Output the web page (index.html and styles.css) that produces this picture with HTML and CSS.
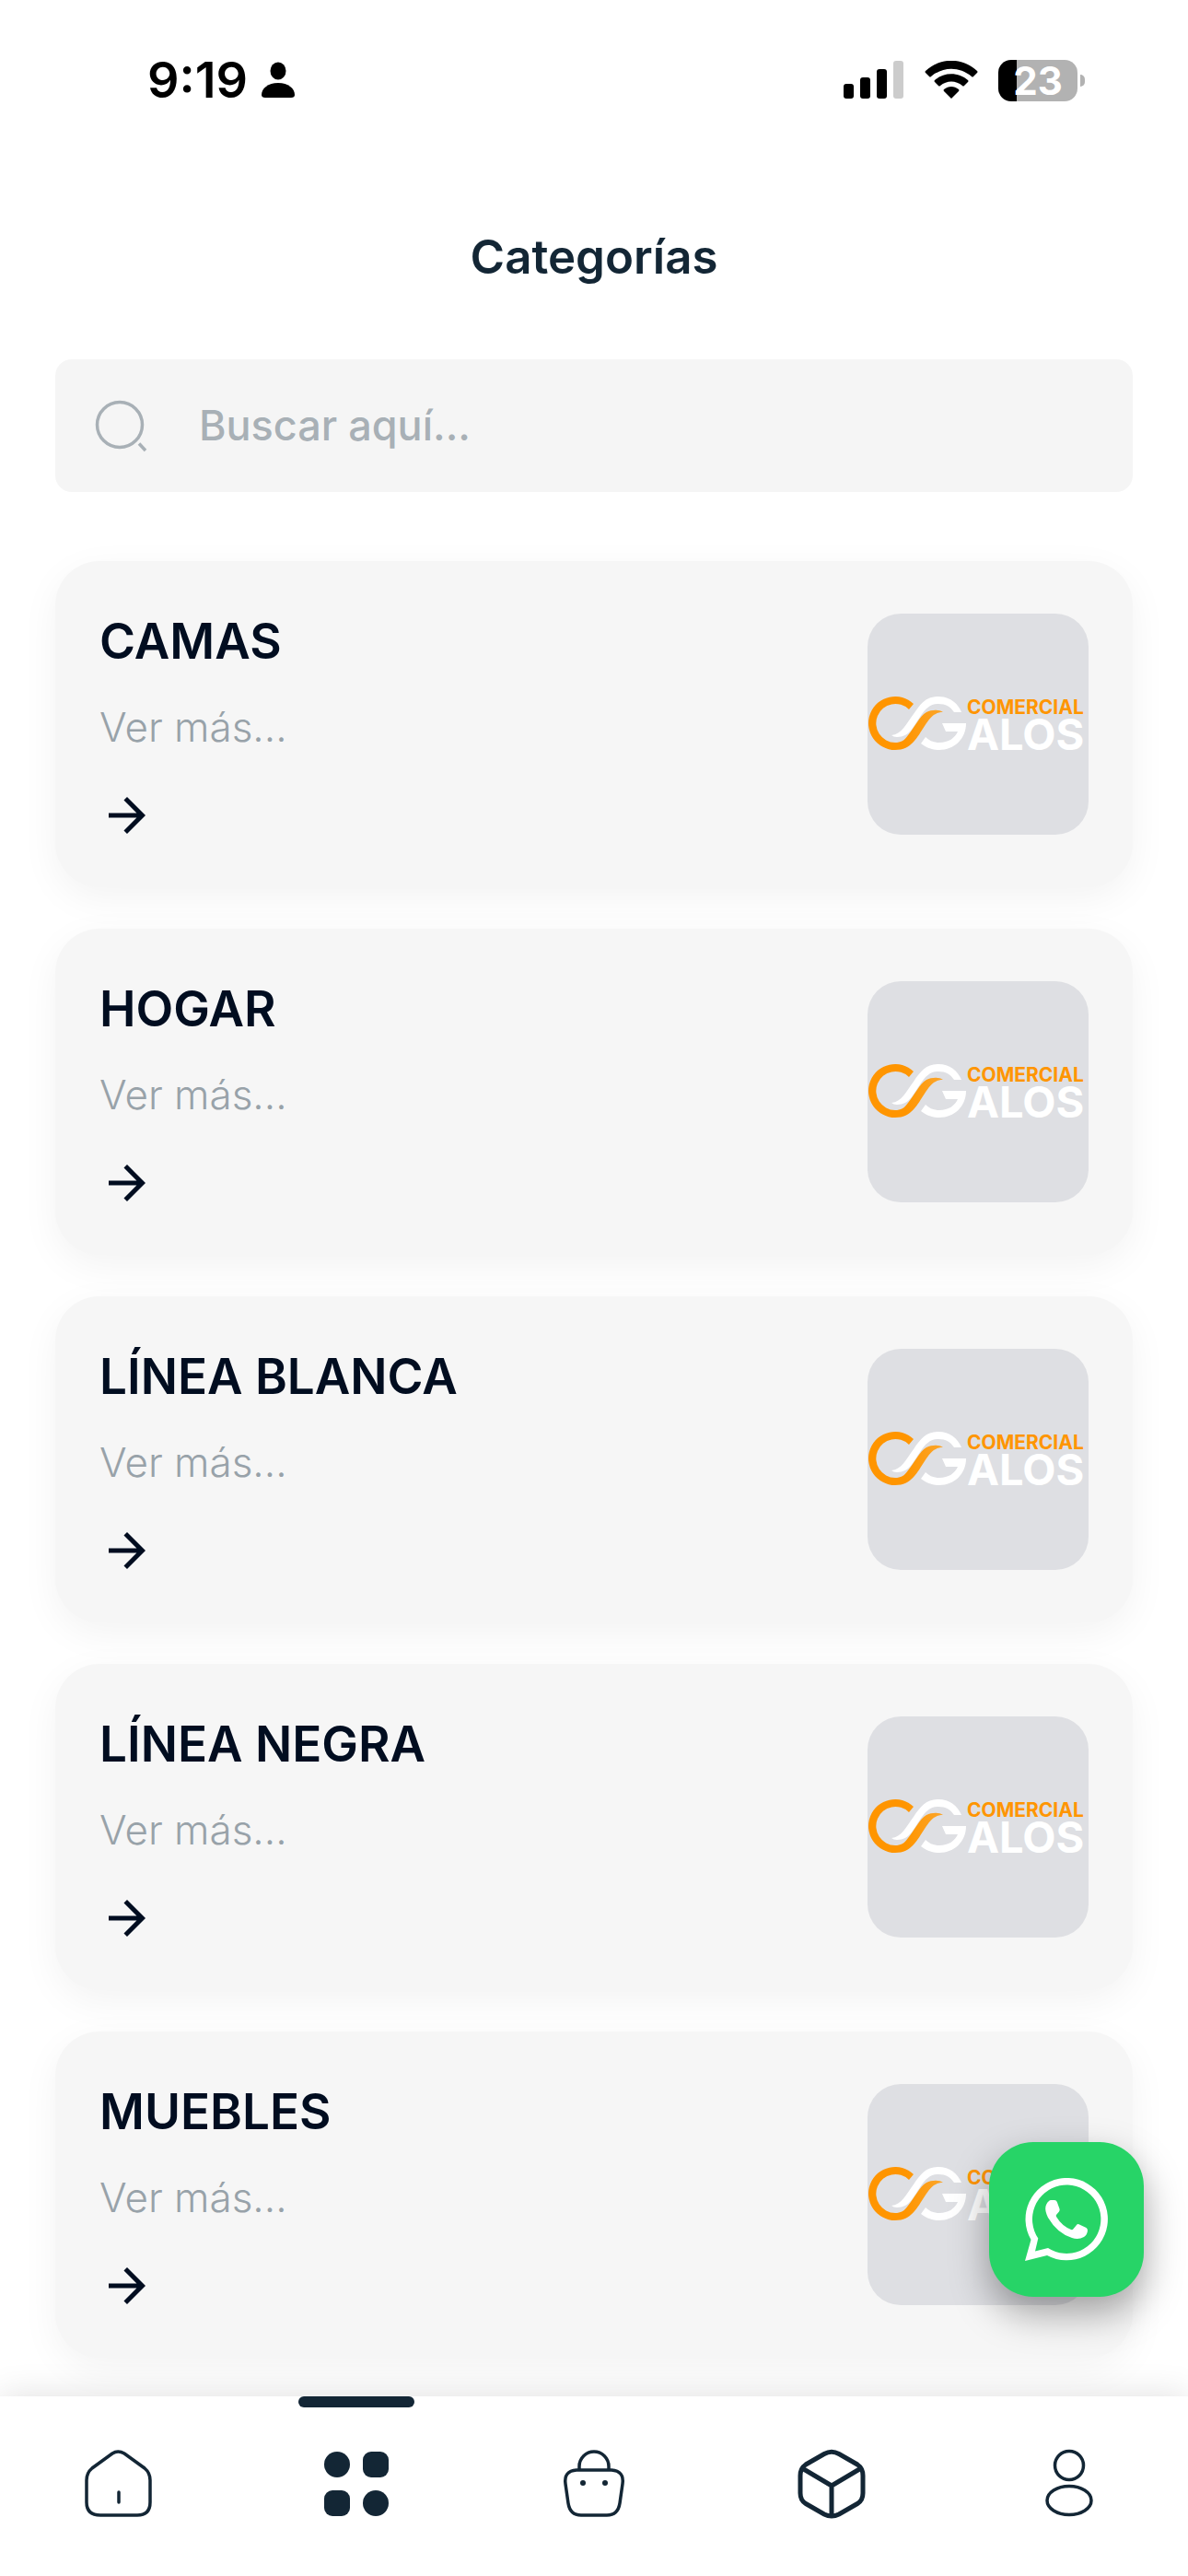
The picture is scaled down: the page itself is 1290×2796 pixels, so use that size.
FILE: index.html
```html
<!DOCTYPE html>
<html lang="es">
<head>
    <meta charset="UTF-8">
    <meta name="viewport" content="width=device-width, initial-scale=1.0">
    <title>Categorías</title>
    <link rel="stylesheet" href="styles.css">
</head>
<body>
    <!-- Shared drawings -->
    <svg class="defs" width="0" height="0" aria-hidden="true">
        <linearGradient id="ribbon" x1="0" y1="0" x2="1" y2="0">
            <stop offset="0.5" stop-color="#ff9500"/>
            <stop offset="1" stop-color="#fba62c"/>
        </linearGradient>
        <symbol id="logo" viewBox="0 89 108 62">
            <path fill="#fff" d="M26 132C37 131 42 120 50 109C58 97 64 90 77 90C89 90 98 97 102 107L94 107C90 101 85 98 77 98C68 98 63 103 57 112C50 122 46 134 32 134Q28 134 26 132Z"/>
            <path fill="url(#ribbon)" d="M50 98A29 29 0 1 0 30 148C48 148 54 134 62 122C68 113 72 107 82 107C78 104 70 104 64 107C56 112 52 122 44 132C40 138 36 140 30 140A21 21 0 1 1 45 104Z"/>
            <path fill="#fff" d="M81 119H107C107 136 94 148 78 148C70 148 63 145 58 141L63 134C67 138 72 140 78 140C88 140 95 135 98 128H85Z"/>
        </symbol>
        <symbol id="arrow" viewBox="0 0 24 24">
            <path fill="currentColor" d="M12 4l-1.41 1.41L16.17 11H4v2h12.17l-5.58 5.59L12 20l8-8z"/>
        </symbol>
    </svg>

    <div class="status-bar">
        <div class="status-left">
            <span class="time">9:19</span>
            <svg width="36" height="40" viewBox="0 0 36 40">
                <ellipse cx="18" cy="10" rx="8.5" ry="9.5"/>
                <path d="M4 39Q0 39 0 36C0 29 7 23 18 23S36 29 36 36Q36 39 32 39Z"/>
            </svg>
        </div>
        <div class="status-right">
            <svg width="66" height="42" viewBox="0 0 66 42">
                <rect x="0" y="25" width="11" height="16" rx="3"/>
                <rect x="18" y="18" width="11" height="23" rx="3"/>
                <rect x="36" y="9" width="11" height="32" rx="3"/>
                <rect x="54" y="0" width="11" height="41" rx="3" fill="#ccc"/>
            </svg>
            <svg width="58" height="42" viewBox="0 0 58 42">
                <path d="M1 13Q0 12 1 11C17-4 41-4 57 11Q58 12 57 13L53 17Q52 18 51 17C38 6 20 6 7 17Q6 18 5 17Z"/>
                <path d="M11 23Q10 22 11 21C21 12 37 12 47 21Q48 22 47 23L43 27Q42 28 41 27C34 21 24 21 17 27Q16 28 15 27Z"/>
                <path d="M21 33Q20 32 21 31C26 27 32 27 37 31Q38 32 37 33L29 41Z"/>
            </svg>
            <div class="battery"><span class="level">23</span></div>
        </div>
    </div>

    <header class="header">
        <h1>Categorías</h1>
    </header>

    <main class="content">
        <label class="search">
            <svg width="60" height="60" viewBox="0 0 60 60" fill="none" stroke="currentColor" stroke-width="3.5">
                <circle cx="28" cy="29" r="24.5"/>
                <path d="M49 49.5l7 7.5"/>
            </svg>
            <input type="text" placeholder="Buscar aquí..." aria-label="Buscar aquí">
        </label>

        <div class="categories">
            <a class="card" href="#camas">
                <div class="card-text">
                    <h2>CAMAS</h2>
                    <p>Ver más...</p>
                    <svg class="arrow"><use href="#arrow"/></svg>
                </div>
                <div class="thumb">
                    <svg class="mark"><use href="#logo"/></svg>
                    <div class="brand"><span class="brand-top">COMERCIAL</span><span class="brand-name">ALOS</span></div>
                </div>
            </a>
            <a class="card" href="#hogar">
                <div class="card-text">
                    <h2>HOGAR</h2>
                    <p>Ver más...</p>
                    <svg class="arrow"><use href="#arrow"/></svg>
                </div>
                <div class="thumb">
                    <svg class="mark"><use href="#logo"/></svg>
                    <div class="brand"><span class="brand-top">COMERCIAL</span><span class="brand-name">ALOS</span></div>
                </div>
            </a>
            <a class="card" href="#linea-blanca">
                <div class="card-text">
                    <h2>LÍNEA BLANCA</h2>
                    <p>Ver más...</p>
                    <svg class="arrow"><use href="#arrow"/></svg>
                </div>
                <div class="thumb">
                    <svg class="mark"><use href="#logo"/></svg>
                    <div class="brand"><span class="brand-top">COMERCIAL</span><span class="brand-name">ALOS</span></div>
                </div>
            </a>
            <a class="card" href="#linea-negra">
                <div class="card-text">
                    <h2>LÍNEA NEGRA</h2>
                    <p>Ver más...</p>
                    <svg class="arrow"><use href="#arrow"/></svg>
                </div>
                <div class="thumb">
                    <svg class="mark"><use href="#logo"/></svg>
                    <div class="brand"><span class="brand-top">COMERCIAL</span><span class="brand-name">ALOS</span></div>
                </div>
            </a>
            <a class="card" href="#muebles">
                <div class="card-text">
                    <h2>MUEBLES</h2>
                    <p>Ver más...</p>
                    <svg class="arrow"><use href="#arrow"/></svg>
                </div>
                <div class="thumb">
                    <svg class="mark"><use href="#logo"/></svg>
                    <div class="brand"><span class="brand-top">COMERCIAL</span><span class="brand-name">ALOS</span></div>
                </div>
            </a>
        </div>
    </main>

    <button class="whatsapp" type="button" aria-label="WhatsApp">
        <svg width="90" height="90" viewBox="0 0 90 90" fill="#fff">
            <path fill-rule="evenodd" d="M0 90L6.500 67A44.700 44.700 0 1 1 24 84ZM11 79.500L25 76A37.200 37.200 0 1 0 14.300 65.500Z"/>
            <path d="M28 24H32Q34 24 34.800 26L37.500 33.500Q38 35 37 36.500L34 40Q33.400 41 34 42Q40 52 50 56Q51.500 56.500 52.500 55.300L56 51Q57 49.700 58.500 50.300L66.500 54Q68 55 68 57Q67.500 62 64 64Q58 67.500 51 65Q35 60 25 43Q19 31 26 25Q27 24 28 24Z"/>
        </svg>
    </button>

    <nav class="tab-bar">
        <a class="tab" href="#inicio" aria-label="Inicio">
            <svg width="78" height="78" viewBox="0 0 78 78" fill="none" stroke="currentColor" stroke-width="3.5">
                <path d="M32 6Q38 2 45 6L67 22Q73 27 73 35V59Q73 73 59 73H19Q4 73 4 59V35Q4 27 10 22Z"/>
                <path d="M39 48V59" stroke-linecap="round"/>
            </svg>
        </a>
        <a class="tab active" href="#categorias" aria-label="Categorías">
            <svg width="78" height="78" viewBox="0 0 78 78" fill="currentColor">
                <circle cx="18" cy="18" r="14"/>
                <rect x="46" y="4" width="28" height="28" rx="9"/>
                <rect x="4" y="46" width="28" height="28" rx="9"/>
                <circle cx="60" cy="60" r="14"/>
            </svg>
        </a>
        <a class="tab" href="#carrito" aria-label="Carrito">
            <svg width="78" height="78" viewBox="0 0 78 78" fill="none" stroke="currentColor" stroke-width="3.500">
                <path d="M23 24V20A16 16 0 0 1 55 20V24"/>
                <path d="M20 24H58Q72 25 70 39L67 60Q65 73 53 73H25Q13 73 11 60L8 39Q6 25 20 24Z"/>
                <circle cx="27" cy="38" r="3" fill="currentColor" stroke="none"/>
                <circle cx="51" cy="38" r="3" fill="currentColor" stroke="none"/>
            </svg>
        </a>
        <a class="tab" href="#pedidos" aria-label="Pedidos">
            <svg width="78" height="78" viewBox="0 0 78 78" fill="none" stroke="currentColor" stroke-width="5">
                <path d="M31 6.500Q39 2 47 6.500L67 18Q73 22 73 30V49Q73 57 67 60.500L47 72Q39 76 31 72L11 60.500Q5 57 5 49V30Q5 22 11 18Z"/>
                <path d="M7 22L39 41L71 22M39 41V74"/>
            </svg>
        </a>
        <a class="tab" href="#perfil" aria-label="Perfil">
            <svg width="78" height="78" viewBox="0 0 78 78" fill="none" stroke="currentColor" stroke-width="3.500">
                <circle cx="39" cy="19" r="15.500"/>
                <ellipse cx="39" cy="57" rx="24" ry="15.500"/>
            </svg>
        </a>
    </nav>
</body>
</html>
```
FILE: styles.css
```css
* {
    box-sizing: border-box;
}

body {
    font-family: Inter, "Liberation Sans", sans-serif;
    margin: 0;
    min-height: 100vh;
    display: flex;
    flex-direction: column;
    background-color: #fff;
    color: #132635;
}

svg {
    display: block;
    flex: none;
}

.defs {
    position: absolute;
}

/* Status bar */
.status-bar {
    display: flex;
    justify-content: space-between;
    align-items: center;
    height: 174px;
    padding: 0 120px 0 160px;
    color: #000;
}

.status-left {
    display: flex;
    align-items: center;
    gap: 15px;
}

.time {
    font-size: 54px;
    font-weight: 600;
    line-height: 60px;
}

.status-right {
    display: flex;
    align-items: center;
    gap: 22px;
}

.battery {
    position: relative;
    width: 86px;
    height: 45px;
    border-radius: 14px;
    background: linear-gradient(to right, #000 20px, #b2b2b2 20px);
    text-align: center;
}

/* battery terminal */
.battery::after {
    content: "";
    position: absolute;
    top: 16px;
    right: -8px;
    width: 5px;
    height: 13px;
    border-radius: 0 6px 6px 0;
    background-color: #b2b2b2;
}

.level {
    font-size: 42px;
    font-weight: 700;
    line-height: 45px;
    color: #fff;
}

/* Header */
.header {
    padding: 75px 60px 81px;
    text-align: center;
}

h1 {
    margin: 0;
    font-size: 51px;
    font-weight: 600;
    line-height: 60px;
}

.content {
    flex: 1;
    padding: 0 60px 42px;
}

.search {
    display: flex;
    align-items: center;
    gap: 54px;
    height: 144px;
    margin-bottom: 75px;
    padding: 0 42px;
    border-radius: 18px;
    background-color: #f5f5f5;
    color: #a8b0b6;
}

.search input {
    flex: 1;
    min-width: 0;
    padding: 0;
    border: none;
    outline: none;
    background: none;
    font-family: inherit;
    font-size: 45px;
    font-weight: 500;
    line-height: 60px;
    color: #132635;
}

.search input::placeholder {
    color: #a8b0b6;
    opacity: 1;
}

/* Category cards */
.categories {
    display: flex;
    flex-direction: column;
    gap: 45px;
}

.card {
    display: flex;
    justify-content: space-between;
    align-items: center;
    padding: 48px;
    border-radius: 48px;
    background-color: #f6f6f6;
    box-shadow: 0 12px 42px rgba(0, 0, 0, 0.05);
    color: #010d20;
    text-decoration: none;
}

.card-text {
    display: flex;
    flex-direction: column;
    gap: 24px;
}

h2 {
    margin: 0;
    font-size: 53px;
    font-weight: 600;
    line-height: 78px;
}

.card p {
    margin: 0;
    font-size: 44px;
    font-weight: 300;
    line-height: 60px;
    color: #98a2a9;
}

.arrow {
    width: 60px;
    height: 60px;
    margin-top: 12px;
}

.thumb {
    display: flex;
    align-items: center;
    width: 240px;
    height: 240px;
    border-radius: 36px;
    background-color: #dedfe3;
}

.mark {
    width: 108px;
    height: 62px;
}

.brand {
    display: flex;
    flex-direction: column;
    font-weight: 700;
}

.brand-top {
    font-size: 21px;
    line-height: 22px;
    color: #ff9500;
}

.brand-name {
    font-size: 47px;
    line-height: 36px;
    color: #fff;
}

/* Floating button */
.whatsapp {
    position: fixed;
    right: 48px;
    bottom: 303px;
    z-index: 2;
    display: flex;
    justify-content: center;
    align-items: center;
    width: 168px;
    height: 168px;
    padding: 0;
    border: none;
    border-radius: 48px;
    background-color: #27d467;
    box-shadow: 0 18px 42px rgba(0, 0, 0, 0.35);
    cursor: pointer;
}

/* Bottom tabs */
.tab-bar {
    position: sticky;
    bottom: 0;
    z-index: 1;
    display: flex;
    height: 195px;
    background-color: #fff;
    box-shadow: 0 0 36px rgba(0, 0, 0, 0.13);
}

.tab {
    position: relative;
    flex: 1;
    display: flex;
    justify-content: center;
    padding-top: 56px;
    color: #132635;
}

/* marker over the current tab */
.tab.active::before {
    content: "";
    position: absolute;
    top: 0;
    left: 50%;
    width: 126px;
    height: 12px;
    margin-left: -63px;
    border-radius: 6px;
    background-color: #132635;
}
```
